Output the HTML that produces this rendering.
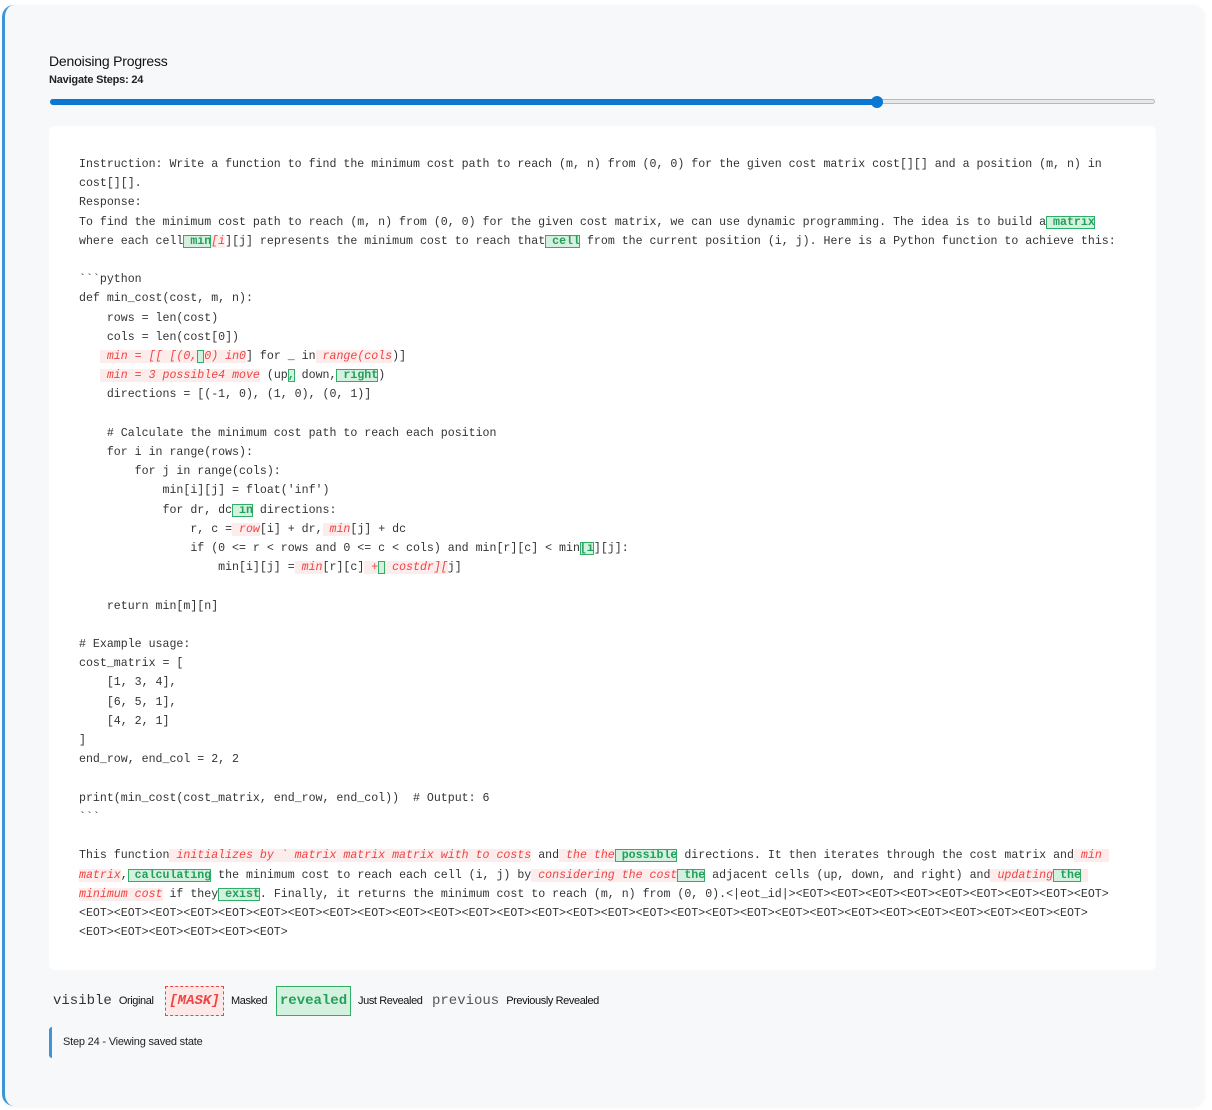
<!DOCTYPE html>
<html><head><meta charset="utf-8"><style>
html,body{margin:0;padding:0;background:#fff;width:1212px;height:1110px;overflow:hidden}
.card{position:absolute;left:2px;top:5px;width:1199px;height:1101px;background:#f7f8fa;border-left:3px solid #3b95d8;border-radius:12px;box-shadow:0 1px 4px rgba(0,0,0,.06)}
.title{position:absolute;left:49px;top:53px;font:14px "Liberation Sans",sans-serif;color:#111;letter-spacing:-0.2px}
.nav{position:absolute;left:49px;top:74px;font:bold 11px "Liberation Sans",sans-serif;color:#222;letter-spacing:-0.2px}
.track{position:absolute;left:50px;top:99px;width:1105px;height:5px;border:1px solid #b8b8b8;border-radius:4px;background:#e8e8e8;box-sizing:border-box}
.fill{position:absolute;left:50px;top:99px;width:828px;height:6px;border-radius:4px;background:#0a78d0}
.thumb{position:absolute;left:871px;top:96px;width:12px;height:12px;border-radius:50%;background:#0a78d0}
.panel{position:absolute;left:49px;top:126px;width:1107px;height:844px;background:#fff;border-radius:6px}
pre{position:absolute;left:79px;top:155px;margin:0;font:11.6px/19.2px "Liberation Mono",monospace;color:#333;white-space:pre}
.m{background:#fdecec;color:#ef4444;font-style:italic}
.r{background:#d4f0de;color:#22a05a;font-weight:bold;outline:1px solid #2fae66;outline-offset:-1px}
.leg{position:absolute;top:986px;height:30px;display:flex;align-items:center}
.lm{font:14px "Liberation Mono",monospace;color:#333}
.ls{font:11px "Liberation Sans",sans-serif;color:#111;margin-left:7px;letter-spacing:-0.4px}
.step{position:absolute;left:49px;top:1027px;height:31px;width:300px;border-left:3px solid #3b95d8;border-radius:3px;font:11px/31px "Liberation Sans",sans-serif;color:#222;padding-left:11px;box-sizing:border-box;letter-spacing:-0.2px}
</style></head><body>
<div class="card"></div>
<div class="title">Denoising Progress</div>
<div class="nav">Navigate Steps: 24</div>
<div class="track"></div><div class="fill"></div><div class="thumb"></div>
<div class="panel"></div>
<pre>Instruction: Write a function to find the minimum cost path to reach (m, n) from (0, 0) for the given cost matrix cost[][] and a position (m, n) in
cost[][].
Response:
To find the minimum cost path to reach (m, n) from (0, 0) for the given cost matrix, we can use dynamic programming. The idea is to build a<span class="r"> matrix</span>
where each cell<span class="r"> min</span><span class="m">[i</span>][j] represents the minimum cost to reach that<span class="r"> cell</span> from the current position (i, j). Here is a Python function to achieve this:

&#96;&#96;&#96;python
def min_cost(cost, m, n):
    rows = len(cost)
    cols = len(cost[0])
   <span class="m"> min = [[ [(0,</span><span class="r"> </span><span class="m">0) in0</span>] for _ in<span class="m"> range(cols</span>)]
   <span class="m"> min = 3 possible4 move</span> (up<span class="r">,</span> down,<span class="r"> right</span>)
    directions = [(-1, 0), (1, 0), (0, 1)]

    # Calculate the minimum cost path to reach each position
    for i in range(rows):
        for j in range(cols):
            min[i][j] = float('inf')
            for dr, dc<span class="r"> in</span> directions:
                r, c =<span class="m"> row</span>[i] + dr,<span class="m"> min</span>[j] + dc
                if (0 &lt;= r &lt; rows and 0 &lt;= c &lt; cols) and min[r][c] &lt; min<span class="r">[i</span>][j]:
                    min[i][j] =<span class="m"> min</span>[r][c]<span class="m"> +</span><span class="r"> </span><span class="m"> costdr][</span>j]

    return min[m][n]

# Example usage:
cost_matrix = [
    [1, 3, 4],
    [6, 5, 1],
    [4, 2, 1]
]
end_row, end_col = 2, 2

print(min_cost(cost_matrix, end_row, end_col))  # Output: 6
&#96;&#96;&#96;

This function<span class="m"> initializes by &#96; matrix matrix matrix with to costs</span> and<span class="m"> the the</span><span class="r"> possible</span> directions. It then iterates through the cost matrix and<span class="m"> min </span>
<span class="m">matrix</span>,<span class="r"> calculating</span> the minimum cost to reach each cell (i, j) by<span class="m"> considering the cost</span><span class="r"> the</span> adjacent cells (up, down, and right) and<span class="m"> updating</span><span class="r"> the</span><span class="m"> </span>
<span class="m">minimum cost</span> if they<span class="r"> exist</span>. Finally, it returns the minimum cost to reach (m, n) from (0, 0).&lt;|eot_id|&gt;&lt;EOT&gt;&lt;EOT&gt;&lt;EOT&gt;&lt;EOT&gt;&lt;EOT&gt;&lt;EOT&gt;&lt;EOT&gt;&lt;EOT&gt;&lt;EOT&gt;
&lt;EOT&gt;&lt;EOT&gt;&lt;EOT&gt;&lt;EOT&gt;&lt;EOT&gt;&lt;EOT&gt;&lt;EOT&gt;&lt;EOT&gt;&lt;EOT&gt;&lt;EOT&gt;&lt;EOT&gt;&lt;EOT&gt;&lt;EOT&gt;&lt;EOT&gt;&lt;EOT&gt;&lt;EOT&gt;&lt;EOT&gt;&lt;EOT&gt;&lt;EOT&gt;&lt;EOT&gt;&lt;EOT&gt;&lt;EOT&gt;&lt;EOT&gt;&lt;EOT&gt;&lt;EOT&gt;&lt;EOT&gt;&lt;EOT&gt;&lt;EOT&gt;&lt;EOT&gt;
&lt;EOT&gt;&lt;EOT&gt;&lt;EOT&gt;&lt;EOT&gt;&lt;EOT&gt;&lt;EOT&gt;</pre>
<div class="leg" style="left:53px"><span class="lm">visible</span><span class="ls">Original</span></div>
<div class="leg" style="left:165px"><span class="lm" style="display:inline-block;width:57px;height:28px;line-height:28px;text-align:center;border:1px dashed #ef4444;background:#fde8e8;color:#ef4444;font-style:italic;font-weight:bold">[MASK]</span><span class="ls">Masked</span></div>
<div class="leg" style="left:276px"><span class="lm" style="display:inline-block;width:73px;height:28px;line-height:28px;text-align:center;border:1px solid #2fae66;background:#d4f0de;color:#22a05a;font-weight:bold">revealed</span><span class="ls">Just Revealed</span></div>
<div class="leg" style="left:432px"><span class="lm" style="color:#555">previous</span><span class="ls">Previously Revealed</span></div>
<div class="step">Step 24 - Viewing saved state</div>
</body></html>
